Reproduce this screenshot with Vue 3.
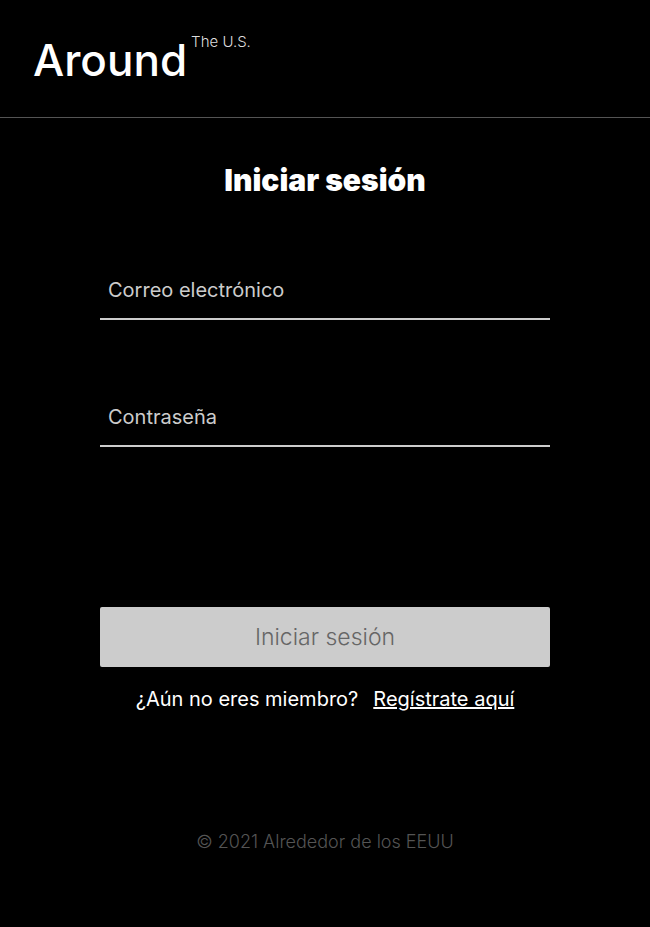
<script setup>
import { ref } from 'vue'

const email = ref('')
const password = ref('')
</script>

<template>
  <div class="page">
    <header class="header">
      <a class="logo" href="#">Around<sup class="logo-sup">The U.S.</sup></a>
    </header>
    <main class="main">
      <form class="form" @submit.prevent>
        <h1 class="title">Iniciar sesión</h1>
        <input v-model="email" class="field" type="email" placeholder="Correo electrónico" aria-label="Correo electrónico" />
        <input v-model="password" class="field" type="password" placeholder="Contraseña" aria-label="Contraseña" />
        <button class="submit" type="submit" disabled>Iniciar sesión</button>
        <p class="hint">¿Aún no eres miembro?<a class="link" href="#">Regístrate aquí</a></p>
      </form>
    </main>
    <footer class="footer">© 2021 Alrededor de los EEUU</footer>
  </div>
</template>

<style>
body {
  margin: 0;
  background: #000;
}
</style>

<style scoped>
.page {
  min-height: 100vh;
  box-sizing: border-box;
  background: #000;
  color: #fff;
  font-family: Inter, "Liberation Sans", sans-serif;
}
.header {
  padding: 32px 33px 29px;
  border-bottom: 1px solid #545454;
}
.logo {
  display: flex;
  align-items: flex-start;
  gap: 4px;
  color: #fff;
  font-size: 44px;
  font-weight: 500;
  line-height: 56px;
  text-decoration: none;
}
.logo-sup {
  color: #ddd;
  font-size: 15px;
  font-weight: 300;
  line-height: 20px;
}
.main {
  padding: 42px 100px 0;
}
.form {
  display: flex;
  flex-direction: column;
}
.title {
  margin: 0 0 62px;
  font-size: 30px;
  font-weight: 900;
  line-height: 40px;
  text-align: center;
}
.field {
  box-sizing: border-box;
  width: 100%;
  height: 58px;
  margin: 0 0 69px;
  padding: 0 8px;
  border: 0;
  border-bottom: 2px solid #ccc;
  border-radius: 0;
  outline: 0;
  background: transparent;
  color: #ccc;
  font-family: inherit;
  font-size: 20px;
}
.field::placeholder {
  color: #ccc;
  opacity: 1;
}
.submit {
  height: 60px;
  margin-top: 91px;
  border: 0;
  border-radius: 2px;
  background: #ccc;
  color: #666;
  font-family: inherit;
  font-size: 23px;
  font-weight: 300;
}
.hint {
  display: flex;
  flex-wrap: wrap;
  justify-content: center;
  gap: 0 15px;
  margin: 20px 0 0;
  font-size: 20px;
  line-height: 24px;
}
.link {
  color: #fff;
  text-decoration-thickness: 2px;
}
.footer {
  padding: 120px 20px 73px;
  color: #545454;
  font-size: 18px;
  font-weight: 300;
  line-height: 22px;
  text-align: center;
}
</style>
